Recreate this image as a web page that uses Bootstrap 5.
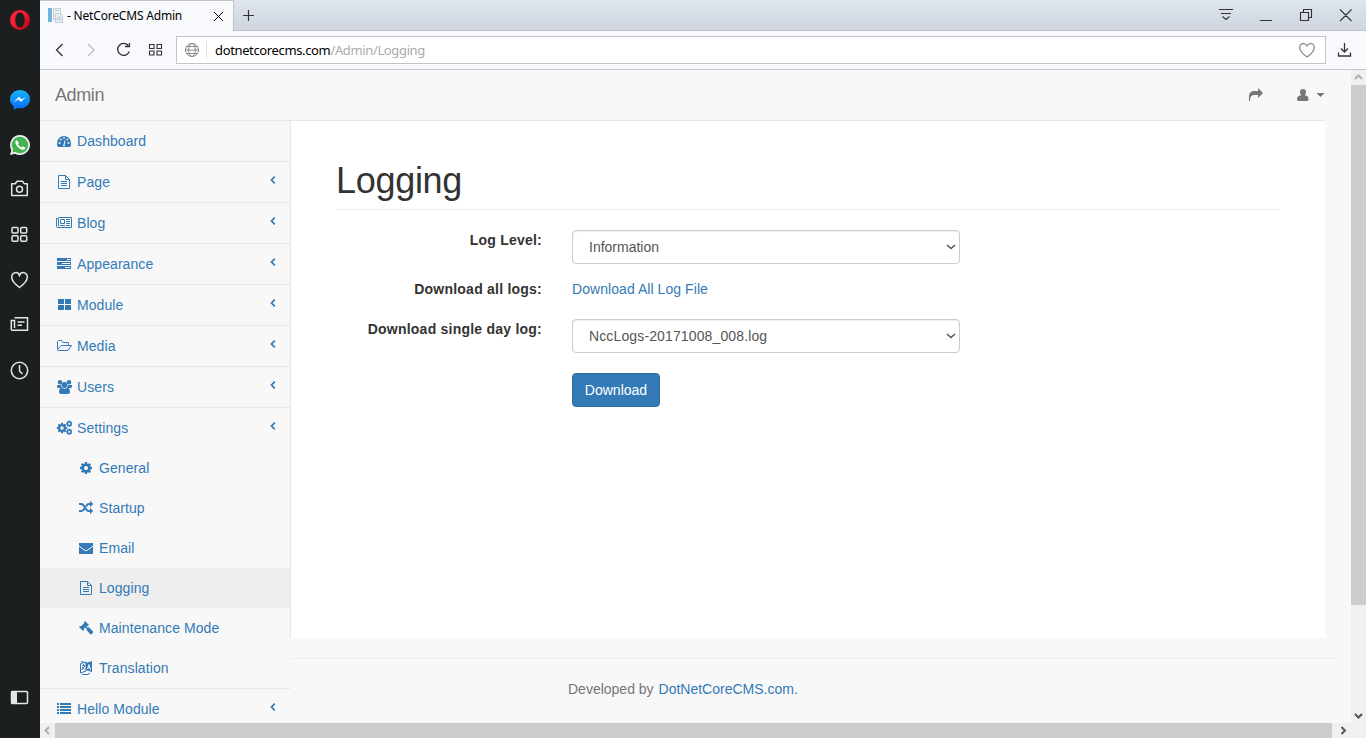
<!DOCTYPE html>
<html lang="en">
<head>
<meta charset="utf-8">
<title>- NetCoreCMS Admin</title>
<link href="https://cdn.jsdelivr.net/npm/bootstrap@5.3.0/dist/css/bootstrap.min.css" rel="stylesheet">
<style>
body{font:14px/20px "Liberation Sans",Arial,sans-serif;color:#333;background:#f8f8f8;height:738px;width:1366px}
svg{display:block;flex:none}
.ln{fill:none;stroke:currentColor}
a{color:#337ab7;text-decoration:none}
.dock{width:40px;background:#1b1f1f;color:#e6e6e6}
.dock svg{margin-left:9px}
.chrome{font-family:"Noto Sans","Open Sans",sans-serif;color:#333}
.tabs{height:31px;background:linear-gradient(#dfe5ed,#d0d6df);border-bottom:1px solid #c1c5ca}
.tab{width:194px;height:31px;background:#f8f9fc;border-top:1px solid #c1c5ca;border-right:1px solid #c1c5ca;font-size:12px;color:#000;padding-left:8px}
.tabtext{margin-left:4px;letter-spacing:-.19px;white-space:nowrap}
.tools{height:39px;background:#f8f9fc;border-bottom:1px solid #c4c7ca}
.url{width:1150px;height:28px;border:1px solid #c3c6c9;background:#fff;font-size:13px;color:#000}
.urltext{margin-left:7px;letter-spacing:-.36px}
.url .rest{color:#aaa}
.topnav{height:51px;border-bottom:1px solid #e7e7e7;width:1285px;color:#777}
.brand{font-size:18px;letter-spacing:-.4px}
.side{width:250px;color:#337ab7}
.side a{height:40px;padding:0 14px 0 16px;gap:5px;letter-spacing:.08px}
.side>li{border-bottom:1px solid #e7e7e7}
.side .sub a{padding-left:38px}
.side .on{background:#eee}
.chev{margin:-5px 0 0 auto}
.main-box{width:1035px;height:517px;background:#fff;border-left:1px solid #e7e7e7;padding:40px 45px 0}
.title{font-size:36px;line-height:40px;border-bottom:1px solid #eee;padding-bottom:8px;margin:0 0 20px;color:#333;font-weight:400;letter-spacing:-.3px}
.lab{width:206px;text-align:right;font-weight:700;margin-right:30px;flex:none;letter-spacing:.23px;white-space:nowrap}
.sel{width:388px;height:34px;border:1px solid #ccc;border-radius:4px;box-shadow:inset 0 1px 1px rgba(0,0,0,.075);color:#555;padding:0 3px 0 16px}
.logname{letter-spacing:.13px}
.btn-go{--bs-btn-bg:#337ab7;--bs-btn-border-color:#2e6da4;--bs-btn-color:#fff;width:88px;height:34px;font-size:14px;line-height:20px;padding:6px 0;border-radius:4px}
.foot{border-top:1px solid #eee;margin-top:20px;width:1050px;padding:20px 0 0 278px;color:#777}
.vbar{width:15px;background:#f0f0f0}
.hbar{height:15px;background:#f0f0f0}
.thumb{background:#cdcdcd}
</style>
</head>
<body class="d-flex overflow-hidden">
<svg width="0" height="0" class="position-absolute"><defs>
<symbol id="file" viewBox="0 0 16 16"><path class="ln" d="M2.500 1.500H9.500L13.500 5.500V14.500H2.500ZM9.500 1.500V5.500H13.500M5 7.500H11M5 9.500H11M5 11.500H11"/></symbol>
<symbol id="chev" viewBox="0 0 6 8"><path class="ln" stroke-width="1.700" d="M4.800.7 1.500 4 4.800 7.300"/></symbol>
<symbol id="cog" viewBox="0 0 1792 1792"><path fill="currentColor" d="M1152 896q0-106-75-181t-181-75-181 75-75 181 75 181 181 75 181-75 75-181zm512-109v222q0 12-8 23t-20 13l-185 28q-19 54-39 91 35 50 107 138 10 12 10 25t-9 23q-27 37-99 108t-94 71q-12 0-26-9l-138-108q-44 23-91 38-16 136-29 186-7 28-36 28h-222q-14 0-24.500-8.500t-11.500-21.500l-28-184q-49-16-90-37l-141 107q-10 9-25 9-14 0-25-11-126-114-165-168-7-10-7-23 0-12 8-23 15-21 51-66.500t54-70.500q-27-50-41-99l-183-27q-13-2-21-12.500t-8-23.500v-222q0-12 8-23t19-13l186-28q14-46 39-92-40-57-107-138-10-12-10-24 0-10 9-23 26-36 98.500-107.500t94.500-71.500q13 0 26 10l138 107q44-23 91-38 16-136 29-186 7-28 36-28h222q14 0 24.500 8.500t11.500 21.500l28 184q49 16 90 37l142-107q9-9 24-9 13 0 25 10 129 119 165 170 7 8 7 22 0 12-8 23-15 21-51 66.500t-54 70.500q26 50 41 98l183 28q13 2 21 12.500t8 23.500z"/></symbol>
<linearGradient id="msg" x2="0" y2="1"><stop stop-color="#18b6fb"/><stop offset="1" stop-color="#0669f8"/></linearGradient>
<linearGradient id="op" x2="1" y2="1"><stop stop-color="#ff2b3d"/><stop offset=".5" stop-color="#f51a2c"/><stop offset="1" stop-color="#a70014"/></linearGradient>
</defs></svg>

<aside class="dock d-flex flex-column flex-shrink-0">
  <svg width="22" height="22" style="margin-top:9px"><path fill="url(#op)" fill-rule="evenodd" d="M11 1a10 10 0 1 0 0 20 10 10 0 0 0 0-20zM11 3.500c2.900 0 4.700 3.300 4.700 7.500s-1.800 7.500-4.700 7.500-4.700-3.300-4.700-7.500S8.100 3.500 11 3.500z"/></svg>
  <svg width="22" height="22" style="margin-top:58px"><path fill="url(#msg)" d="M11 1C5.500 1 1 5 1 10.200c0 3 1.500 5.500 3.800 7.200V21l3.400-2.100c.9.300 1.800.4 2.800.4 5.500 0 10-4 10-9.100S16.500 1 11 1z"/><path fill="#fff" d="m5 13 5-5.200 2.500 2.600L17 7.800l-4.900 5.200-2.600-2.600z"/></svg>
  <svg width="22" height="22" style="margin-top:23px"><path fill="#f0f0f0" d="M11 1a10 10 0 0 0-8.600 15L1 21l5-1.300A10 10 0 1 0 11 1z"/><path fill="#42b34e" d="M11 2.800A8.200 8.200 0 0 0 4.200 15.600l-.8 3 3-.8A8.200 8.200 0 1 0 11 2.800z"/><path fill="#fff" d="M7.800 6c-1.600.7-2 2.500-.8 4.600 1.500 2.700 3.600 4.500 6.200 5.200 1.600.3 3-.6 3.100-2.300l-2.500-1.300-1.300 1.300c-1.700-.7-2.900-1.900-3.600-3.400l1-1.200z"/></svg>
  <svg width="22" height="20" class="ln" stroke-width="1.500" style="margin-top:23px"><path d="M2.700 4.700h3.500L8 2.200h5.500l1.600 2.500h3.200v11.700H2.700z" stroke-linejoin="round"/><circle cx="10.500" cy="10.300" r="3"/></svg>
  <svg width="22" height="18" class="ln" stroke-width="1.500" style="margin-top:27px"><rect x="3" y="1.500" width="6" height="5.500" rx="1"/><rect x="11.700" y="1.500" width="6" height="5.500" rx="1"/><rect x="3" y="9.700" width="6" height="5.500" rx="1"/><rect x="11.700" y="9.700" width="6" height="5.500" rx="1"/></svg>
  <svg width="22" height="20" class="ln" stroke-width="1.500" style="margin-top:26px"><path d="M10.500 17.500C6.500 14.500 2.700 11 2.700 7.200c0-5 6-6.400 7.800-1.800 1.800-4.600 7.800-3.200 7.800 1.800 0 3.800-3.800 7.300-7.800 10.300z"/></svg>
  <svg width="22" height="18" class="ln" stroke-width="1.500" style="margin-top:26px"><path d="M5.500 1.700h13v12.600H3.300c-1 0-1-.6-1-1V4.500h3.200V12M8.500 6h7M8.500 9.300h4.500"/></svg>
  <svg width="22" height="22" class="ln" stroke-width="1.500" style="margin-top:26px"><circle cx="10.500" cy="10.500" r="8.200"/><path d="M10.500 5v6l3 3"/></svg>
  <svg width="22" height="18" style="margin-top:307px"><rect x="2.500" y="2.500" width="16" height="12" rx="1" class="ln" stroke-width="1.500"/><path fill="currentColor" d="M2 2h6v13H2z"/></svg>
</aside>

<div class="d-flex flex-column flex-grow-1">
<header class="chrome">
  <div class="tabs d-flex">
    <div class="tab d-flex align-items-center">
      <svg width="15" height="16"><path fill="#f1f3f5" stroke="#c7ccd1" d="M5.500.5h7v11h-7z"/><path fill="#74b4da" d="M0 0h4v14H0z"/><path fill="#e6ebef" stroke="#c4cbd1" d="M7.500 5.500h5l2 2v7h-7z"/><path stroke="#a9c8dc" d="M7 2.500h4M9 9.500h4M9 11.500h4"/></svg>
      <span class="tabtext">- NetCoreCMS Admin</span>
      <svg width="11" height="11" class="ln ms-auto" style="margin-right:9px"><path d="m1 1 9 9M10 1l-9 9"/></svg>
    </div>
    <svg width="12" height="12" class="ln" stroke-width="1.200" style="margin:10px 0 0 9px"><path d="M5.500 0v11M0 5.500h11"/></svg>
    <svg width="150" height="20" class="ln ms-auto" stroke-width="1.100" style="margin-top:6px"><path d="M3 3.500h14M5 7.500h10M6.500 10.500 10 13.500l3.500-3M44 14.500h12M84.500 6.500h8v8h-8zM87.500 6.500v-3h8v8H93M124 3.500 135.500 15M135.500 3.500 124 15"/></svg>
  </div>
  <div class="tools d-flex align-items-center">
    <svg width="136" height="20" class="ln" stroke-width="1.300"><path d="m22.500 4-6 6 6 6"/><path style="stroke:#bbb" d="m48 4 6 6-6 6"/><path d="M88.300 5.500A6 6 0 1 0 89.300 11.500M85 6.500h4.500V3"/><path stroke-width="1.100" d="M109.500 4.500h4.500v4h-4.500zM117 4.500h4.500v4H117zM109.500 11h4.500v4h-4.500zM117 11h4.500v4H117z"/></svg>
    <div class="url d-flex align-items-center">
      <svg width="31" height="20" class="ln" style="stroke:#888"><circle cx="15" cy="10" r="6.500"/><ellipse cx="15" cy="10" rx="3.300" ry="6.500"/><path d="M8.500 10h13M9.500 6.500h11M9.500 13.500h11"/><path style="stroke:#ddd" d="M29.500 1v18"/></svg>
      <span class="urltext">dotnetcorecms.com<span class="rest">/Admin/Logging</span></span>
      <svg width="18" height="16" class="ln ms-auto" style="margin-right:9px;stroke:#888" stroke-width="1.200"><path d="M9 15C5 12 1.700 9 1.700 5.700 1.700.8 7.500.5 9 4c1.500-3.500 7.300-3.200 7.300 1.700C16.300 9 13 12 9 15z"/></svg>
    </div>
    <svg width="16" height="16" class="ln" stroke-width="1.300" style="margin-left:10px"><path d="M8.500 1v9M5 6.500 8.500 10 12 6.500M2.500 10.500V14h12v-3.500"/></svg>
  </div>
</header>

<div class="d-flex flex-grow-1">
<div class="flex-grow-1 d-flex flex-column overflow-hidden" style="height:653px">
  <nav class="topnav d-flex align-items-center flex-shrink-0">
    <span class="brand" style="margin-left:15px">Admin</span>
    <svg width="16" height="16" class="ms-auto" fill="currentColor"><path d="M10 1v3H7C3 4 1 6 1 9v5h1c0-4 1-6 5-6h3v3l5-5z"/></svg>
    <svg width="32" height="16" style="margin:0 -3px 0 32px" fill="currentColor"><path d="M4 5a3 3 0 0 1 6 0c0 1.300-.4 2.500-1.200 3.200C11.500 8.600 12.500 10 12.500 12c0 1-.5 2-1.500 2H3C2 14 1 13.500 1 12c0-2 1-3.400 4.200-3.800C4.400 7.500 4 6.300 4 5zM20.500 6h8l-4 4z"/></svg>
  </nav>
  <div class="d-flex">
    <ul class="side list-unstyled mb-0 flex-shrink-0">
      <li><a href="#" class="d-flex align-items-center"><svg width="16" height="16"><path fill="currentColor" d="M8 3a7 7 0 0 0-7 7c0 1.500.2 3 .8 4h12.400c.6-1 .8-2.500.8-4a7 7 0 0 0-7-7z"/><path stroke="#f8f8f8" stroke-width="1.700" d="M2.500 10h2M11.500 10h2M4 6.500h1.600M7.200 5h1.600M10.500 6.500h1.600"/><path stroke="#f8f8f8" d="M9 7.500 8 12M7 12.500h2"/></svg><span>Dashboard</span></a></li>
      <li><a href="#" class="d-flex align-items-center"><svg width="16" height="16"><use href="#file"/></svg><span>Page</span><svg class="chev" width="6" height="8"><use href="#chev"/></svg></a></li>
      <li><a href="#" class="d-flex align-items-center"><svg width="16" height="16"><path class="ln" d="M2.500 2.500h13v10H1.500c-1 0-1-.5-1-1v-8h2v8M5 4.500h3.500v4H4.500v-4M10 4.500h4M10 6.500h4M10 8.500h4M4 10.500h5M10 10.500h4"/></svg><span>Blog</span><svg class="chev" width="6" height="8"><use href="#chev"/></svg></a></li>
      <li><a href="#" class="d-flex align-items-center"><svg width="16" height="16"><path fill="currentColor" d="M1 2h14v3H1zM1 6h14v3H1zM1 10h14v3H1z"/><path stroke="#f8f8f8" d="M11 3.500h3M6 7.500h8M9 11.500h5"/></svg><span>Appearance</span><svg class="chev" width="6" height="8"><use href="#chev"/></svg></a></li>
      <li><a href="#" class="d-flex align-items-center"><svg width="16" height="16"><path fill="currentColor" d="M2 2h6v5H2zM9 2h6v5H9zM2 8h6v5H2zM9 8h6v5H9z"/></svg><span>Module</span><svg class="chev" width="6" height="8"><use href="#chev"/></svg></a></li>
      <li><a href="#" class="d-flex align-items-center"><svg width="16" height="16"><path class="ln" d="M1.500 11.500v-8l1-1h3l1.500 2h5.500v3M1.500 11.500 5 7.500h10.500L12 12.500H2z"/></svg><span>Media</span><svg class="chev" width="6" height="8"><use href="#chev"/></svg></a></li>
      <li><a href="#" class="d-flex align-items-center"><svg width="16" height="16" fill="currentColor"><circle cx="4" cy="3.300" r="2.200"/><circle cx="13" cy="3.300" r="2.200"/><circle cx="8.500" cy="6" r="3"/><path d="M1 6h4c0 1.600.4 2.300 1 3H2C1.300 9 1 8 1 7zM16 6h-4c0 1.600-.4 2.300-1 3h4c.7 0 1-1 1-2zM3 13c0-2.500.8-4.200 3-4.200 1.500 1.200 3.500 1.200 5 0 2.200 0 3 1.700 3 4.200 0 1.300-1 2-2 2H5c-1 0-2-.7-2-2z"/></svg><span>Users</span><svg class="chev" width="6" height="8"><use href="#chev"/></svg></a></li>
      <li><a href="#" class="d-flex align-items-center"><svg width="16" height="16"><use href="#cog" x="0" y="2" width="12" height="12"/><use href="#cog" x="9.500" y="0" width="7.500" height="7.500"/><use href="#cog" x="9.500" y="8" width="7.500" height="7.500"/></svg><span>Settings</span><svg class="chev" width="6" height="8"><use href="#chev"/></svg></a>
        <ul class="sub list-unstyled mb-0">
          <li><a href="#" class="d-flex align-items-center"><svg width="16" height="16"><use href="#cog" x="1" y="1" width="14" height="14"/></svg><span>General</span></a></li>
          <li><a href="#" class="d-flex align-items-center"><svg width="16" height="16"><path class="ln" stroke-width="2" d="M1 4h2.500C6.500 4 7.500 11 10.500 11H13M1 11h2.500c1.200 0 2.200-1 3-2.500M8 6.500C8.700 5 9.500 4 10.500 4H13"/><path fill="currentColor" d="M12 .8v6.400L15.200 4zM12 7.800v6.400l3.200-3.200z"/></svg><span>Startup</span></a></li>
          <li><a href="#" class="d-flex align-items-center"><svg width="16" height="16"><path fill="currentColor" d="M1 3h14v11H1z"/><path fill="none" stroke="#f8f8f8" d="M1 6 6 9.800c1.500 1 2.500 1 4 0L15 6"/></svg><span>Email</span></a></li>
          <li><a href="#" class="on d-flex align-items-center"><svg width="16" height="16"><use href="#file"/></svg><span>Logging</span></a></li>
          <li><a href="#" class="d-flex align-items-center"><svg width="16" height="16" fill="currentColor"><path d="m1 7 1-1 1 .3L6.300 3 6 2l1-1 4 4-1 1-1-.3L8.500 6.200l1.500 1.500.8-.7L15 11.500c.3 1.500-1 3-2.500 3L8.500 10l.3-1.200L7.300 7.400 5.700 9l.3 1-1 1z"/></svg><span>Maintenance Mode</span></a></li>
          <li><a href="#" class="d-flex align-items-center"><svg width="16" height="16"><path fill="currentColor" d="m8 3 6-2v11l-6-2z"/><path class="ln" d="M2.500 3.500 8 2v9l-5.500 2zM3 1.500l5 1.500M4 5.500h3M5.500 4v2M3.700 10 6.800 6M4 7l2.500 2.500M4 14.500h6l2-1.500"/><path fill="none" stroke="#f8f8f8" d="m9.500 9 1.500-4.500 1.500 5.500M10 7.700h2"/></svg><span>Translation</span></a></li>
        </ul></li>
      <li class="border-0"><a href="#" class="d-flex align-items-center"><svg width="16" height="16"><path fill="currentColor" d="M1 2h2v2H1zM4 2h11v2H4zM1 5h2v2H1zM4 5h11v2H4zM1 8h2v2H1zM4 8h11v2H4zM1 11h2v2H1zM4 11h11v2H4z"/></svg><span>Hello Module</span><svg class="chev" width="6" height="8"><use href="#chev"/></svg></a></li>
    </ul>
    <main class="flex-shrink-0">
      <section class="main-box">
        <h1 class="title">Logging</h1>
        <div class="d-flex" style="margin-bottom:15px"><label class="lab">Log Level:</label><div class="sel d-flex align-items-center justify-content-between"><span>Information</span><svg width="10" height="8" class="ln" stroke-width="1.600"><path d="M1 2l4 3.500L9 2"/></svg></div></div>
        <div class="d-flex" style="margin-bottom:20px"><label class="lab">Download all logs:</label><a href="#" style="letter-spacing:.06px">Download All Log File</a></div>
        <div class="d-flex" style="margin-bottom:20px"><label class="lab">Download single day log:</label><div class="sel d-flex align-items-center justify-content-between"><span class="logname">NccLogs-20171008_008.log</span><svg width="10" height="8" class="ln" stroke-width="1.600"><path d="M1 2l4 3.500L9 2"/></svg></div></div>
        <button class="btn btn-go" style="margin-left:236px">Download</button>
      </section>
      <footer class="foot">Developed by&nbsp;<a href="#" style="margin-left:1px">DotNetCoreCMS.com.</a></footer>
    </main>
  </div>
</div>
<div class="vbar d-flex flex-column">
  <svg width="15" height="15" class="ln" stroke-width="2" style="stroke:#b0b0b0"><path d="m4 9 3.500-3.500L11 9"/></svg>
  <div class="thumb" style="height:520px"></div>
  <svg width="15" height="15" class="ln mt-auto" stroke-width="2" style="stroke:#555"><path d="m4 6 3.500 3.500L11 6"/></svg>
</div>
</div>
<div class="hbar d-flex">
  <svg width="15" height="15" class="ln" stroke-width="2" style="stroke:#b0b0b0"><path d="M9 4 5.500 7.500 9 11"/></svg>
  <div class="thumb" style="width:1277px"></div>
  <svg width="19" height="15" class="ln" stroke-width="2" style="stroke:#555"><path d="m9.500 4 3.500 3.500L9.500 11"/></svg>
</div>
</div>
<script src="https://cdn.jsdelivr.net/npm/bootstrap@5.3.0/dist/js/bootstrap.bundle.min.js"></script>
</body>
</html>
